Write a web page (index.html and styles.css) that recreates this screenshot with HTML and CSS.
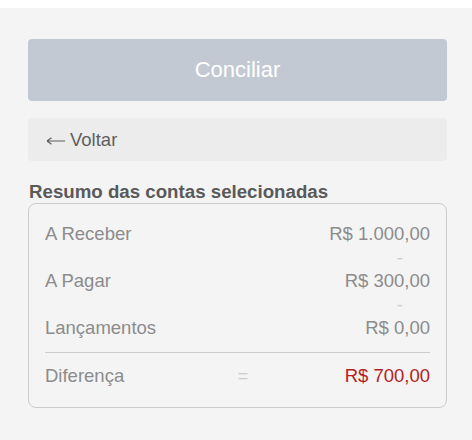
FILE: index.html
```html
<!DOCTYPE html>
<html lang="pt-BR">
<head>
  <meta charset="UTF-8">
  <title>Conciliação</title>
  <link rel="stylesheet" href="styles.css">
</head>
<body>
  <div class="painel">
    <button class="btn-conciliar" disabled>Conciliar</button>
    <button class="btn-voltar">
      <svg class="seta" width="19" height="10" viewBox="0 0 19 10" aria-hidden="true">
        <path d="M1 5H19M1 5L5.5 1.8M1 5L5.5 8.2" fill="none" stroke="#5f5f5f" stroke-width="1.2"/>
      </svg>
      Voltar
    </button>

    <h3>Resumo das contas selecionadas</h3>
    <div class="resumo">
      <div class="linha">
        <span>A Receber</span>
        <span class="valor">R$ 1.000,00</span>
      </div>
      <div class="operador">-</div>
      <div class="linha">
        <span>A Pagar</span>
        <span class="valor">R$ 300,00</span>
      </div>
      <div class="operador">-</div>
      <div class="linha">
        <span>Lançamentos</span>
        <span class="valor">R$ 0,00</span>
      </div>
      <hr>
      <div class="linha total">
        <span>Diferença</span>
        <span class="igual">=</span>
        <span class="valor negativo">R$ 700,00</span>
      </div>
    </div>
  </div>
</body>
</html>
```

FILE: styles.css
```css
body {
  margin: 0;
  padding-top: 8px;
  background: #ffffff;
  font-family: 'Liberation Sans', Arial, sans-serif;
}

.painel {
  background: #f4f4f4;
  min-height: 432px;
  padding: 31px 25px 0 28px;
  box-sizing: border-box;
  display: flex;
  flex-direction: column;
}

button {
  font-family: inherit;
  border: none;
  border-radius: 4px;
  width: 100%;
}

.btn-conciliar {
  height: 62px;
  background: #c3c9d3;
  color: #ffffff;
  font-size: 22px;
}

.btn-voltar {
  margin-top: 17px;
  height: 43px;
  background: #ececec;
  color: #5f5f5f;
  font-size: 18.5px;
  padding: 0 18px;
  cursor: pointer;
  display: flex;
  align-items: center;
  gap: 5px;
}

.seta {
  margin-top: 2px;
}

h3 {
  margin: 20px 0 0 1px;
  font-size: 18.7px;
  line-height: 22px;
  color: #5a5a5a;
  font-weight: bold;
}

.resumo {
  border: 1px solid #cccccc;
  border-radius: 8px;
  padding: 18px 16px 19px;
  color: #8c8c8c;
  font-size: 18.5px;
}

.linha {
  display: flex;
  justify-content: space-between;
  line-height: 24px;
}

.operador {
  text-align: right;
  padding-right: 27px;
  line-height: 23px;
  color: #cccccc;
}

hr {
  border: none;
  border-top: 1px solid #cccccc;
  margin: 12px 0 11px;
}

.total .igual {
  color: #cccccc;
  margin-left: 17px;
}

.negativo {
  color: #b52222;
}
```
